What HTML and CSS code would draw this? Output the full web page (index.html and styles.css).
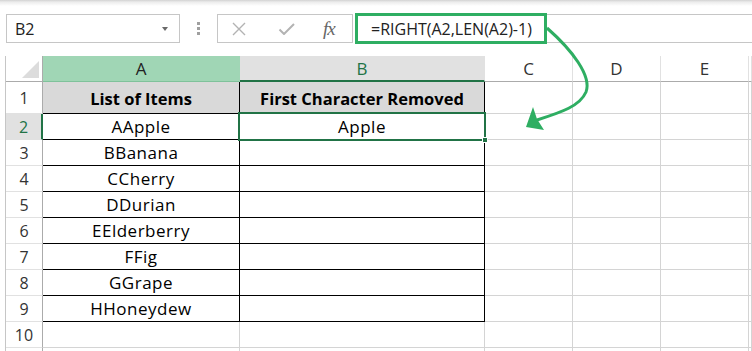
FILE: index.html
```html
<!DOCTYPE html>
<html lang="en">
<head>
    <meta charset="UTF-8">
    <meta name="viewport" content="width=device-width, initial-scale=1.0">
    <title>RIGHT and LEN</title>
    <link rel="stylesheet" href="styles.css">
</head>
<body>

    <div class="app">
        <!-- Formula Bar -->
        <div class="formula-bar">
            <div class="name-box">
                <span>B2</span>
                <span class="caret"></span>
            </div>
            <div class="grip"><i></i><i></i><i></i></div>
            <div class="fx-buttons">
                <svg class="icon" width="16" height="14" viewBox="0 0 16 14">
                    <path d="M2 1 L14 13 M14 1 L2 13" stroke="#b3b3b3" stroke-width="1.4" fill="none"/>
                </svg>
                <svg class="icon" width="17" height="12" viewBox="0 0 17 12">
                    <path d="M1.5 6.5 L6 11 L16 1" stroke="#b3b3b3" stroke-width="2" fill="none"/>
                </svg>
                <span class="fx">fx</span>
            </div>
            <div class="formula-input">
                <span class="formula-highlight">=RIGHT(A2,LEN(A2)-1)</span>
            </div>
        </div>

        <!-- Worksheet -->
        <div class="sheet">
            <div class="corner"><span class="corner-mark"></span></div>
            <div class="col-head col-a">A</div>
            <div class="col-head col-sel">B</div>
            <div class="col-head">C</div>
            <div class="col-head">D</div>
            <div class="col-head">E</div>
            <div class="col-head"></div>

            <div class="row-head row-1">1</div>
            <div class="cell head">List of Items</div>
            <div class="cell head">First Character Removed</div>
            <div class="cell"></div><div class="cell"></div><div class="cell"></div><div class="cell"></div>

            <div class="row-head row-sel">2</div>
            <div class="cell data">AApple</div>
            <div class="cell data active">Apple<span class="selection"><span class="handle"></span></span></div>
            <div class="cell"></div><div class="cell"></div><div class="cell"></div><div class="cell"></div>

            <div class="row-head">3</div>
            <div class="cell data">BBanana</div>
            <div class="cell data"></div>
            <div class="cell"></div><div class="cell"></div><div class="cell"></div><div class="cell"></div>

            <div class="row-head">4</div>
            <div class="cell data">CCherry</div>
            <div class="cell data"></div>
            <div class="cell"></div><div class="cell"></div><div class="cell"></div><div class="cell"></div>

            <div class="row-head">5</div>
            <div class="cell data">DDurian</div>
            <div class="cell data"></div>
            <div class="cell"></div><div class="cell"></div><div class="cell"></div><div class="cell"></div>

            <div class="row-head">6</div>
            <div class="cell data">EElderberry</div>
            <div class="cell data"></div>
            <div class="cell"></div><div class="cell"></div><div class="cell"></div><div class="cell"></div>

            <div class="row-head">7</div>
            <div class="cell data">FFig</div>
            <div class="cell data"></div>
            <div class="cell"></div><div class="cell"></div><div class="cell"></div><div class="cell"></div>

            <div class="row-head">8</div>
            <div class="cell data">GGrape</div>
            <div class="cell data"></div>
            <div class="cell"></div><div class="cell"></div><div class="cell"></div><div class="cell"></div>

            <div class="row-head">9</div>
            <div class="cell data">HHoneydew</div>
            <div class="cell data"></div>
            <div class="cell"></div><div class="cell"></div><div class="cell"></div><div class="cell"></div>

            <div class="row-head">10</div>
            <div class="cell"></div><div class="cell"></div>
            <div class="cell"></div><div class="cell"></div><div class="cell"></div><div class="cell"></div>

            <div class="row-head"></div>
            <div class="cell"></div><div class="cell"></div>
            <div class="cell"></div><div class="cell"></div><div class="cell"></div><div class="cell"></div>
        </div>

        <!-- Annotation arrow from formula to result -->
        <svg class="arrow" width="752" height="351" viewBox="0 0 752 351">
            <path d="M547 28 C572 50 592 76 586 92 C580 106 562 112 537 120" stroke="#2eae62" stroke-width="3" fill="none"/>
            <polygon points="526,127 533,107 537,119 544,130" fill="#2eae62"/>
        </svg>
    </div>

</body>
</html>
```

FILE: styles.css
```css
/* Reset default margins and paddings */
* {
    margin: 0;
    padding: 0;
    box-sizing: border-box;
}

body {
    font-family: 'Open Sans', 'Noto Sans', sans-serif;
    background-color: #ffffff;
    color: #000;
    overflow: hidden;
}

.app {
    position: relative;
    width: 752px;
    height: 351px;
    overflow: hidden;
    background: linear-gradient(#d2d2d2 0, #ececec 2px, #ffffff 6px);
}

/* Formula bar */
.formula-bar {
    display: flex;
    align-items: center;
    height: 29px;
    margin-top: 14px;
}

.name-box {
    display: flex;
    align-items: center;
    justify-content: space-between;
    width: 174px;
    height: 29px;
    margin-left: 6px;
    padding: 0 11px 0 8px;
    border: 1px solid #c6c6c6;
    background-color: #fff;
    font-size: 16px;
    color: #222;
}

.caret {
    width: 0;
    height: 0;
    border-left: 3px solid transparent;
    border-right: 3px solid transparent;
    border-top: 4px solid #6a6a6a;
}

.grip {
    display: flex;
    flex-direction: column;
    align-items: center;
    gap: 2px;
    width: 37px;
}

.grip i {
    display: block;
    width: 3px;
    height: 3px;
    background-color: #a0a0a0;
}

.fx-buttons {
    display: flex;
    align-items: center;
    width: 136px;
    height: 29px;
    padding-left: 13px;
    border: 1px solid #c6c6c6;
    background-color: #fff;
}

.fx-buttons .icon {
    display: block;
}

.fx-buttons .icon + .icon {
    margin-left: 31px;
}

.fx {
    margin-left: 28px;
    font-family: 'Liberation Serif', serif;
    font-style: italic;
    font-size: 19px;
    color: #666;
    letter-spacing: -1px;
    line-height: 1;
}

.formula-input {
    flex: 1;
    display: flex;
    height: 29px;
    margin-left: 2px;
    border-top: 1px solid #c6c6c6;
    border-bottom: 1px solid #c6c6c6;
    background-color: #fff;
}

.formula-highlight {
    display: flex;
    align-items: center;
    width: 192px;
    height: 31px;
    margin-top: -2px;
    padding-left: 13px;
    border: 3px solid #2eae62;
    font-size: 16px;
    color: #222;
}

/* Worksheet grid */
.sheet {
    display: grid;
    grid-template-columns: 37px 197px 245px 88px 88px 88px 1fr;
    grid-template-rows: 26px 32px repeat(10, 26px);
    margin-top: 13px;
    margin-left: 5px;
    border-left: 1px solid #c6c6c6;
    font-size: 17px;
}

.corner,
.col-head,
.row-head,
.cell {
    display: flex;
    align-items: center;
    justify-content: center;
    border-right: 1px solid #d4d4d4;
    border-bottom: 1px solid #d4d4d4;
}

.corner {
    position: relative;
    background-color: #fff;
    border-bottom-color: #ababab;
    border-right-color: #ababab;
}

.corner-mark {
    position: absolute;
    right: 3px;
    bottom: 3px;
    width: 0;
    height: 0;
    border-left: 17px solid transparent;
    border-bottom: 17px solid #dcdcdc;
}

.col-head {
    background-color: #fff;
    color: #333;
    border-right-color: #e1e1e1;
    border-bottom-color: #ababab;
    font-size: 17px;
}

.col-a {
    background-color: #a0d6b5;
    color: #222;
    border-right-color: #a0d6b5;
    border-bottom-color: #7fc29b;
}

.col-sel {
    background-color: #e1e1e1;
    color: #217346;
    border-bottom: 2px solid #217346;
}

.row-head {
    background-color: #fff;
    color: #333;
    border-right-color: #ababab;
    border-bottom-color: #e1e1e1;
    font-size: 16px;
}

.row-sel {
    background-color: #e1e1e1;
    color: #217346;
    border-right: 2px solid #217346;
}

.cell {
    background-color: #fff;
    color: #000;
    letter-spacing: 0.5px;
}

.cell.head {
    background-color: #d9d9d9;
    font-size: 16.5px;
    font-weight: bold;
    letter-spacing: 0;
    padding-top: 2px;
    border-right-color: #000;
    border-bottom-color: #000;
}

.cell.data {
    border-right-color: #000;
    border-bottom-color: #000;
}

.cell.active {
    position: relative;
}

/* Selected cell outline */
.selection {
    position: absolute;
    top: -2px;
    left: -2px;
    right: -2px;
    bottom: -2px;
    border: 2px solid #217346;
}

.handle {
    position: absolute;
    right: -4px;
    bottom: -4px;
    width: 6px;
    height: 6px;
    background-color: #217346;
    border: 1px solid #fff;
}

/* Annotation */
.arrow {
    position: absolute;
    top: 0;
    left: 0;
    pointer-events: none;
}
```
